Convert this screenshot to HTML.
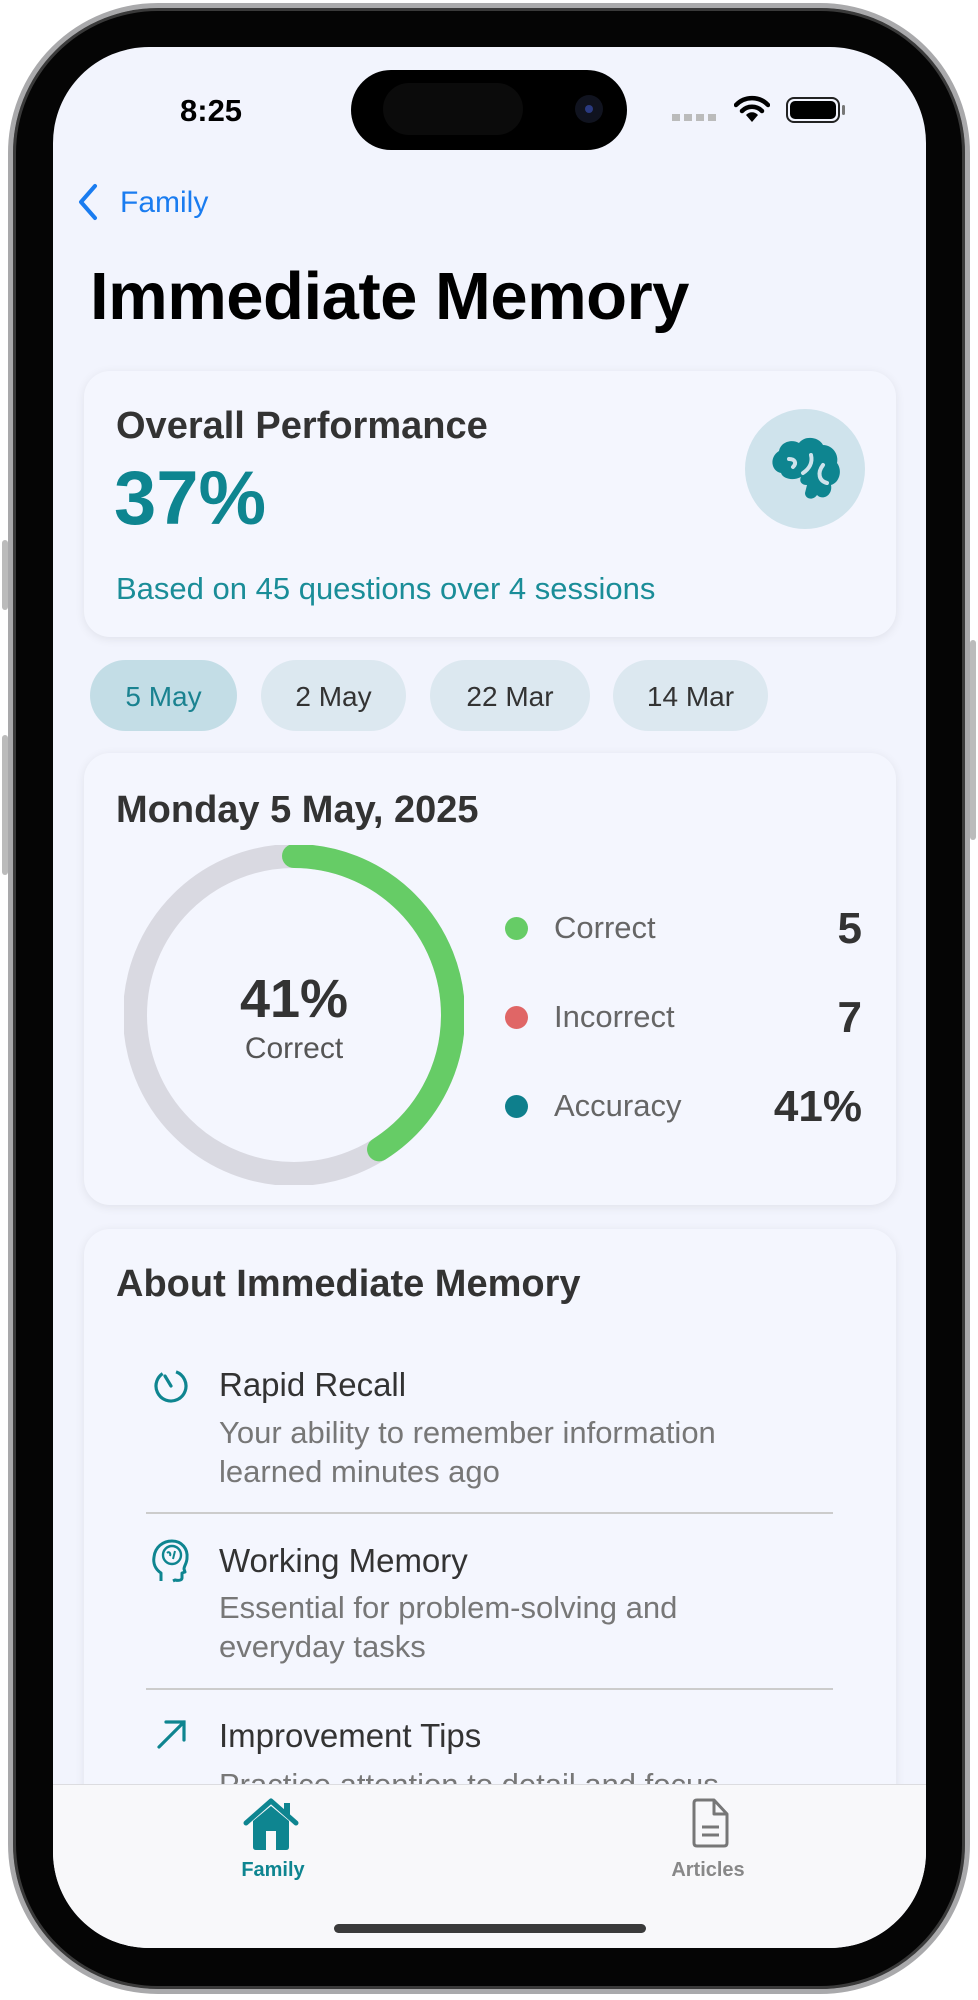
<!DOCTYPE html>
<html><head><meta charset="utf-8"><style>
*{margin:0;padding:0;box-sizing:border-box}
html,body{width:978px;height:2000px;background:#fff;overflow:hidden;font-family:"Liberation Sans",sans-serif}
.a{position:absolute;white-space:nowrap}
#phone{position:absolute;left:8px;top:3px;width:962px;height:1991px;background:#050505;border-radius:150px;border:5px solid #a9a9ab;box-shadow:inset 0 0 0 3px #3a3a3a}
#screen{position:absolute;left:53px;top:47px;width:873px;height:1901px;background:#f2f4fd;border-radius:96px;overflow:hidden}
.card{position:absolute;left:31px;width:812px;background:#f4f6fe;border-radius:26px;box-shadow:0 2px 10px rgba(0,0,0,0.08)}
.pill{position:absolute;top:613px;height:71px;border-radius:36px;background:#dce8f0;color:#333;font-size:28px;line-height:73px;text-align:center}
</style></head><body>
<div style="position:absolute;left:2px;top:540px;width:6px;height:70px;background:#bbb;border-radius:3px"></div>
<div style="position:absolute;left:2px;top:735px;width:6px;height:140px;background:#bbb;border-radius:3px"></div>
<div style="position:absolute;left:970px;top:640px;width:6px;height:200px;background:#bbb;border-radius:3px"></div>
<div id="phone"></div>
<div id="screen">
  <div class="a" style="left:127px;top:46px;font-size:31px;font-weight:bold;color:#000;line-height:36px">8:25</div>
  <div class="a" style="left:298px;top:23px;width:276px;height:80px;background:#000;border-radius:40px"></div>
  <div class="a" style="left:330px;top:36px;width:140px;height:52px;background:#0b0b0b;border-radius:26px"></div>
  <div class="a" style="left:522px;top:48px;width:28px;height:28px;background:#10131f;border-radius:50%"></div>
  <div class="a" style="left:532px;top:58px;width:8px;height:8px;background:#2a3a80;border-radius:50%"></div>
  <div class="a" style="left:619px;top:67px;width:44px;height:7px;background:repeating-linear-gradient(90deg,#bbb 0 8px,transparent 8px 12px)"></div>
  <svg class="a" style="left:681px;top:48px" width="36" height="28" viewBox="0 0 36 28"><path d="M2 10 A22 22 0 0 1 34 10" stroke="#000" stroke-width="4.5" fill="none" stroke-linecap="round"/><path d="M8 16 A14 14 0 0 1 28 16" stroke="#000" stroke-width="4.5" fill="none" stroke-linecap="round"/><path d="M18 27 L12 20 A8 8 0 0 1 24 20 Z" fill="#000"/></svg>
  <div class="a" style="left:733px;top:50px;width:54px;height:26px;border:2.5px solid #222;border-radius:8px;padding:2px"><div style="width:100%;height:100%;background:#000;border-radius:5px"></div></div>
  <div class="a" style="left:789px;top:58px;width:3px;height:10px;background:#777;border-radius:2px"></div>
  <svg class="a" style="left:24px;top:136px" width="22" height="38" viewBox="0 0 22 38"><path d="M18 3 L4 19 L18 35" stroke="#1a7cf0" stroke-width="4" fill="none" stroke-linecap="round" stroke-linejoin="round"/></svg>
  <div class="a" style="left:67px;top:138px;font-size:30px;color:#1a7cf0;line-height:36px">Family</div>
  <div class="a" style="left:37px;top:210px;font-size:67px;font-weight:bold;color:#000;line-height:80px;letter-spacing:-0.5px">Immediate Memory</div>
  <div class="card" style="top:324px;height:266px"></div>
  <div class="a" style="left:63px;top:358px;font-size:38px;font-weight:bold;color:#333;line-height:42px">Overall Performance</div>
  <div class="a" style="left:61px;top:412px;font-size:76px;font-weight:bold;color:#0e8590;line-height:80px">37%</div>
  <div class="a" style="left:63px;top:525px;font-size:31px;color:#1a8d98;line-height:34px">Based on 45 questions over 4 sessions</div>
  <div class="a" style="left:692px;top:362px;width:120px;height:120px;border-radius:50%;background:#cfe3ec"></div>
  <svg class="a" style="left:712px;top:382px" width="80" height="80" viewBox="0 0 80 80"><path d="M14 22 C16 12 28 10 34 14 C40 6 54 8 58 16 C68 16 74 26 72 34 C78 42 74 54 66 56 C68 66 58 72 52 66 C48 72 40 70 40 64 L42 56 C36 56 34 52 36 48 C28 52 18 50 16 44 C6 42 4 28 14 22 Z" fill="#0e8590"/><path d="M24 30 C30 30 32 34 28 38 M46 26 C48 34 44 40 38 44 M58 36 C52 44 54 52 62 54" stroke="#cfe3ec" stroke-width="4" fill="none" stroke-linecap="round"/></svg>
  <div class="pill" style="left:37px;width:147px;background:#c3dde6;color:#1a8290">5 May</div>
  <div class="pill" style="left:208px;width:145px">2 May</div>
  <div class="pill" style="left:377px;width:160px">22 Mar</div>
  <div class="pill" style="left:560px;width:155px">14 Mar</div>
  <div class="card" style="top:706px;height:452px"></div>
  <div class="a" style="left:63px;top:742px;font-size:38px;font-weight:bold;color:#333;line-height:42px">Monday 5 May, 2025</div>
  <svg class="a" style="left:71px;top:798px" width="340" height="340" viewBox="0 0 340 340"><circle cx="170" cy="170" r="159" stroke="#d9d9e1" stroke-width="24" fill="none"/><circle cx="170" cy="170" r="159" stroke="#66cc66" stroke-width="24" fill="none" stroke-linecap="round" stroke-dasharray="409.6 1000" transform="rotate(-90 170 170)"/></svg>
  <div class="a" style="left:141px;top:922px;width:200px;text-align:center;font-size:54px;font-weight:bold;color:#333;line-height:60px">41%</div>
  <div class="a" style="left:141px;top:985px;width:200px;text-align:center;font-size:30px;color:#555;line-height:34px">Correct</div>
  <div class="a" style="left:452px;top:870px;width:23px;height:23px;border-radius:50%;background:#66cc66"></div>
  <div class="a" style="left:452px;top:959px;width:23px;height:23px;border-radius:50%;background:#e06666"></div>
  <div class="a" style="left:452px;top:1048px;width:23px;height:23px;border-radius:50%;background:#0e7f8c"></div>
  <div class="a" style="left:501px;top:864px;font-size:31px;color:#666;line-height:34px">Correct</div>
  <div class="a" style="left:501px;top:953px;font-size:31px;color:#666;line-height:34px">Incorrect</div>
  <div class="a" style="left:501px;top:1042px;font-size:31px;color:#666;line-height:34px">Accuracy</div>
  <div class="a" style="left:609px;top:858px;width:200px;text-align:right;font-size:44px;font-weight:bold;color:#333;line-height:48px">5</div>
  <div class="a" style="left:609px;top:947px;width:200px;text-align:right;font-size:44px;font-weight:bold;color:#333;line-height:48px">7</div>
  <div class="a" style="left:609px;top:1036px;width:200px;text-align:right;font-size:44px;font-weight:bold;color:#333;line-height:48px">41%</div>
  <div class="card" style="top:1182px;height:700px"></div>
  <div class="a" style="left:63px;top:1216px;font-size:38px;font-weight:bold;color:#333;line-height:42px">About Immediate Memory</div>
  <svg class="a" style="left:99px;top:1317px" width="38" height="40" viewBox="0 0 38 40"><circle cx="19" cy="22" r="15" stroke="#0e8590" stroke-width="3.2" fill="none" stroke-dasharray="80 14" transform="rotate(-70 19 22)"/><path d="M19 22 L13 12" stroke="#0e8590" stroke-width="3.2" stroke-linecap="round"/></svg>
  <div class="a" style="left:166px;top:1319px;font-size:33px;color:#333;line-height:38px">Rapid Recall</div>
  <div class="a" style="left:166px;top:1366px;font-size:31px;color:#777;line-height:39px">Your ability to remember information<br>learned minutes ago</div>
  <div class="a" style="left:93px;top:1465px;width:687px;height:1.5px;background:#ccc"></div>
  <svg class="a" style="left:98px;top:1492px" width="40" height="44" viewBox="0 0 40 44"><path d="M10 42 L10 34 C4 30 2 24 3 18 C4 8 12 2 21 2 C31 2 37 10 36 19 C36 24 33 27 33 30 L34 33 L31 34 L31 39 C31 41 28 42 24 41 L22 42" stroke="#0e8590" stroke-width="3" fill="none" stroke-linejoin="round"/><circle cx="21" cy="16" r="9" stroke="#0e8590" stroke-width="2.4" fill="none"/><path d="M16 14 C18 12 20 14 19 17 M24 12 L22 20" stroke="#0e8590" stroke-width="2" fill="none"/></svg>
  <div class="a" style="left:166px;top:1495px;font-size:33px;color:#333;line-height:38px">Working Memory</div>
  <div class="a" style="left:166px;top:1541px;font-size:31px;color:#777;line-height:39px">Essential for problem-solving and<br>everyday tasks</div>
  <div class="a" style="left:93px;top:1641px;width:687px;height:1.5px;background:#ccc"></div>
  <svg class="a" style="left:102px;top:1670px" width="34" height="34" viewBox="0 0 34 34"><path d="M4 30 L29 5 M11 5 L29 5 L29 23" stroke="#0e8590" stroke-width="3.2" fill="none" stroke-linecap="round"/></svg>
  <div class="a" style="left:166px;top:1670px;font-size:33px;color:#333;line-height:38px">Improvement Tips</div>
  <div class="a" style="left:166px;top:1718px;font-size:31px;color:#777;line-height:39px">Practice attention to detail and focus</div>
  <div class="a" style="left:0;top:1737px;width:873px;height:170px;background:#f8f8fa;border-top:1.5px solid #dcdce0"></div>
  <svg class="a" style="left:189px;top:1750px" width="58" height="54" viewBox="0 0 58 54"><path d="M4 26 L29 4 L54 26" stroke="#0e8590" stroke-width="5" fill="none" stroke-linecap="round" stroke-linejoin="round"/><rect x="42" y="6" width="6" height="12" fill="#0e8590"/><path d="M11 24 L29 9 L47 24 L47 50 Q47 53 44 53 L14 53 Q11 53 11 50 Z" fill="#0e8590"/><rect x="24" y="34" width="10" height="19" fill="#f8f8fa"/></svg>
  <div class="a" style="left:170px;top:1811px;width:100px;text-align:center;font-size:20px;font-weight:bold;color:#0e8590;line-height:24px">Family</div>
  <svg class="a" style="left:637px;top:1750px" width="40" height="52" viewBox="0 0 40 52"><path d="M4 6 Q4 3 7 3 L24 3 L37 17 L37 46 Q37 49 34 49 L7 49 Q4 49 4 46 Z M24 3 L24 17 L37 17" stroke="#777" stroke-width="3" fill="none" stroke-linejoin="round"/><path d="M12 30 L29 30 M12 38 L29 38" stroke="#777" stroke-width="3"/></svg>
  <div class="a" style="left:605px;top:1811px;width:100px;text-align:center;font-size:20px;font-weight:bold;color:#888;line-height:24px">Articles</div>
  <div class="a" style="left:281px;top:1877px;width:312px;height:9px;background:#3a3a3a;border-radius:5px"></div>
</div>
</body></html>
